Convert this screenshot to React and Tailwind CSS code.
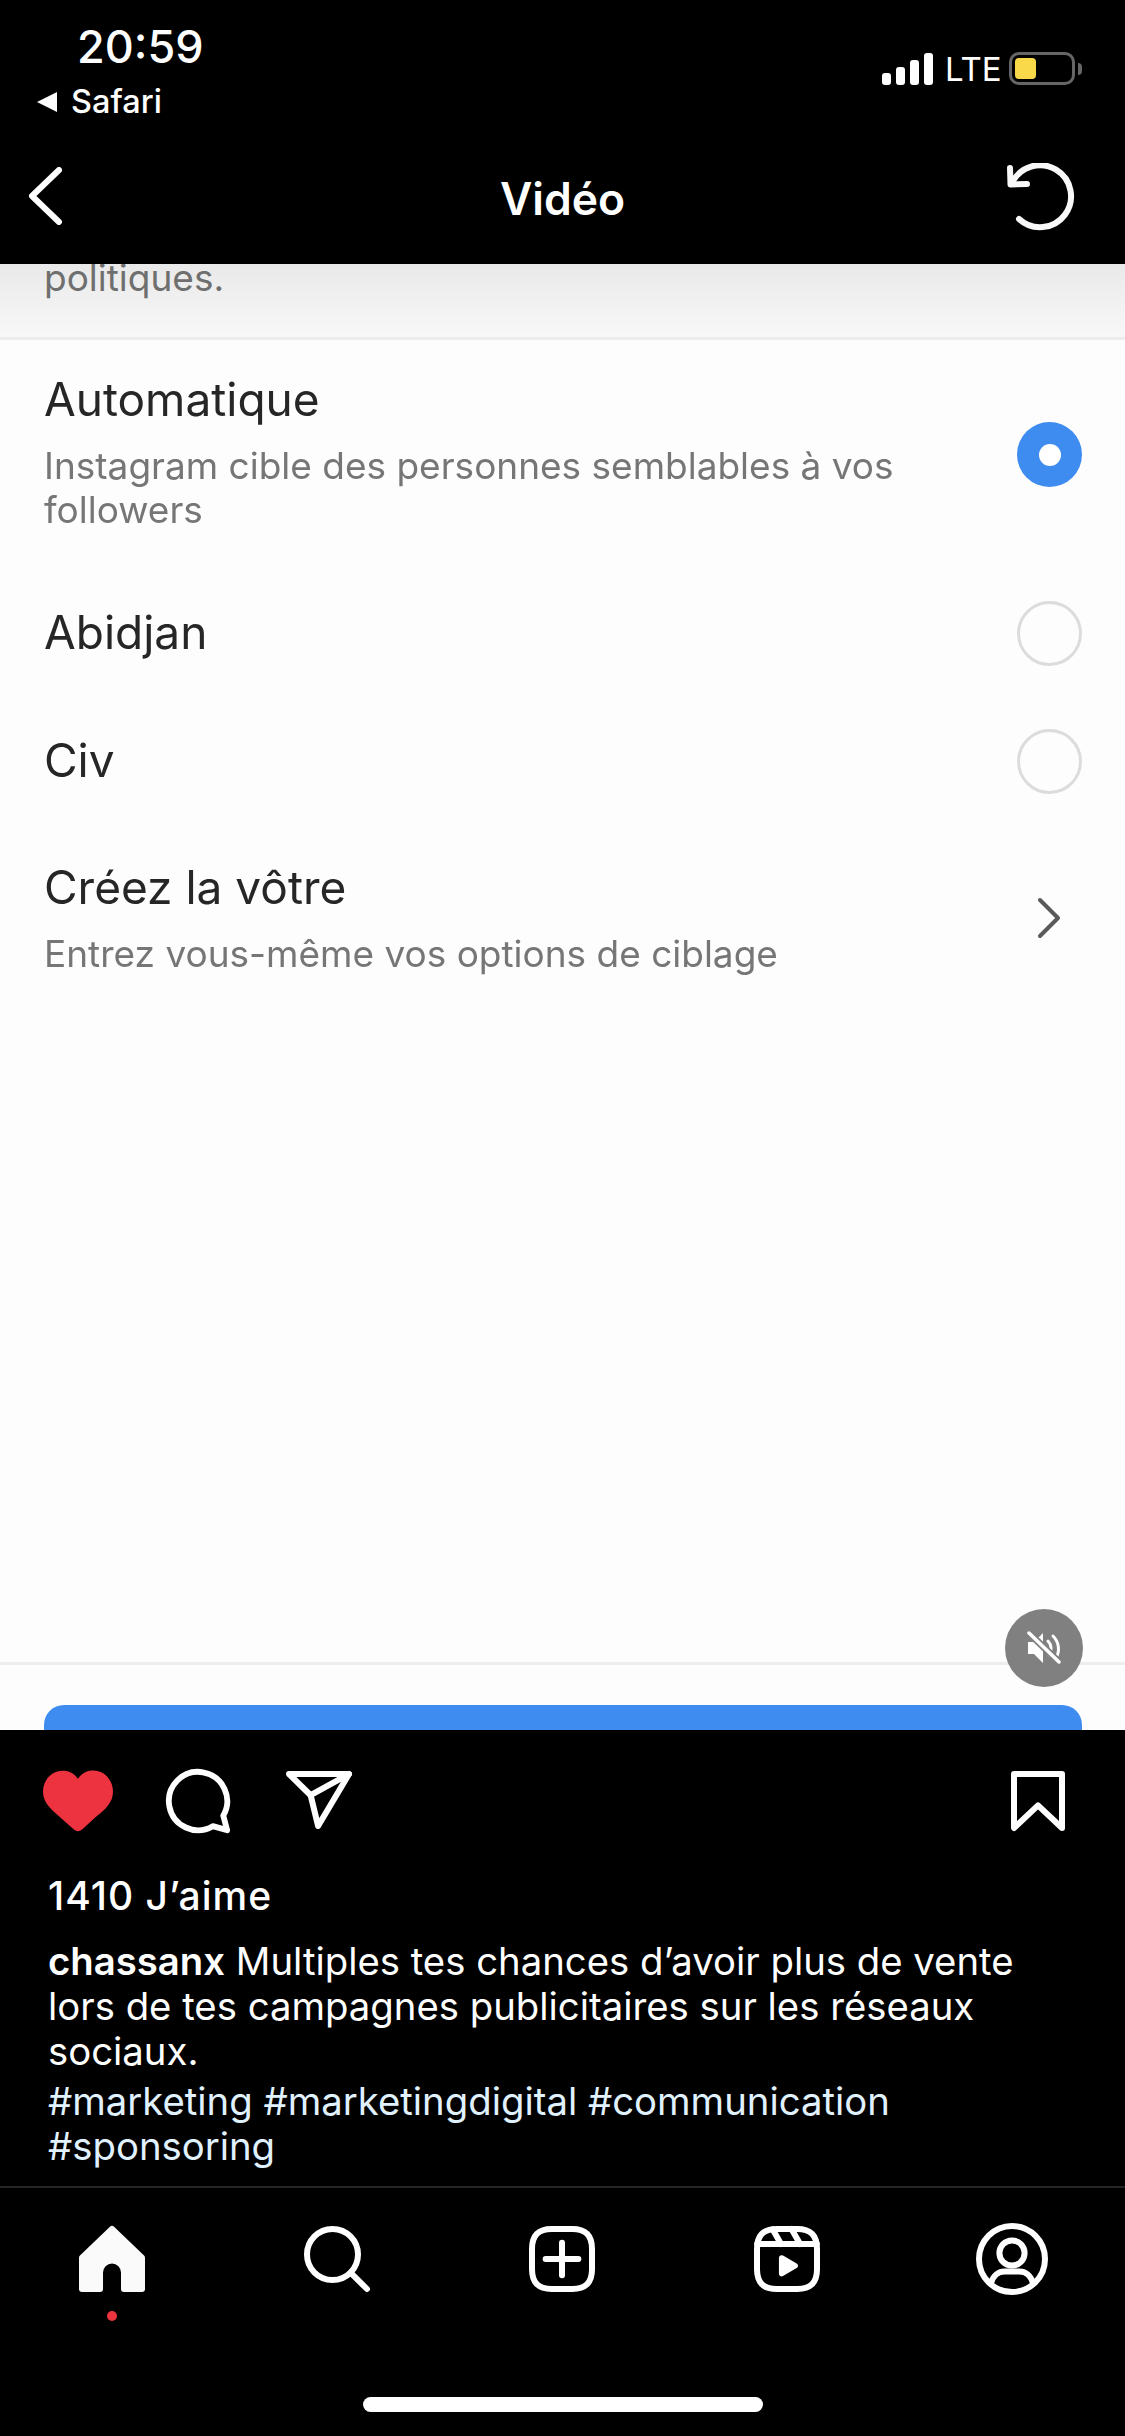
const font = "font-['Inter','Liberation_Sans',sans-serif]"

const Radio = ({on}) => on ? (
	<div className="w-[65px] h-[65px] rounded-full bg-[#3f8cf1] flex items-center justify-center shrink-0">
		<div className="w-[22px] h-[22px] rounded-full bg-white"></div>
	</div>
) : (
	<div className="w-[65px] h-[65px] mt-[2px] rounded-full border-[3px] border-[#dcdcdc] shrink-0"></div>
)

const Icon = ({size=72, fill="none", sw=2, box="0 0 24 24", children}) => (
	<svg width={size} height={size} viewBox={box} fill={fill} stroke={fill==="none" ? "white" : "none"} strokeWidth={sw} strokeLinecap="round" strokeLinejoin="round" className="block">
		{children}
	</svg>
)

const StatusBar = () => (
	<div className="h-[133px] relative">
		<div className="flex justify-between items-start pl-[37px] pr-[43px] pt-[23px]">
			<div>
				<div className="pl-[40px] text-[45px] leading-[48px] font-medium text-white">20:59</div>
				<div className="flex items-center gap-[14px] mt-[12px]">
					<div className="w-0 h-0 border-y-[10px] border-y-transparent border-r-[20px] border-r-white"></div>
					<span className="text-[32.500px] leading-[38px] font-medium text-white">Safari</span>
				</div>
			</div>
			<div className="flex items-end gap-[12px] pt-[29px]">
				<div className="flex items-end gap-[5px] h-[32px]">
					<div className="w-[9px] h-[12px] rounded-[3px] bg-white"></div>
					<div className="w-[9px] h-[18px] rounded-[3px] bg-white"></div>
					<div className="w-[9px] h-[25px] rounded-[3px] bg-white"></div>
					<div className="w-[9px] h-[32px] rounded-[3px] bg-white"></div>
				</div>
				<span className="text-[33px] leading-[32px] text-white w-[52px]">LTE</span>
				<div className="flex items-center">
					<div className="w-[66px] h-[33px] rounded-[10px] border-[3px] border-[#666666] p-[3px]">
						<div className="w-[21px] h-full rounded-[4px] bg-[#f9d84a]"></div>
					</div>
					<div className="w-[4px] h-[12px] ml-[3px] rounded-r-full bg-[#666666]"></div>
				</div>
			</div>
		</div>
	</div>
)

const NavBar = () => (
	<div className="h-[131px] flex items-center justify-between pl-[28px] pr-[50px]">
		<div className="w-[90px]">
			<svg width="34" height="58" viewBox="0 0 34 58" fill="none" stroke="white" strokeWidth="6" strokeLinecap="round" strokeLinejoin="round" className="mb-[5px]">
				<path d="M31 3 4 29l27 26" />
			</svg>
		</div>
		<span className="text-[44.500px] leading-[50px] font-semibold text-white">Vidéo</span>
		<svg width="68" height="68" viewBox="0 0 68 68" fill="none" stroke="#f8f8f8" strokeWidth="6" strokeLinecap="round" strokeLinejoin="round" className="mb-[3px]">
			<path d="M5 20A31 31 0 1 1 12 56" />
			<path d="M3 5 3.500 21.500 20 21" />
		</svg>
	</div>
)

const VideoArea = () => (
	<div className="h-[1466px] relative overflow-hidden bg-[#fdfdfd]">
		<div className="blur-[0.5px]">
			<div className="h-[76px] bg-gradient-to-b from-[#e9e9e9] to-[#f8f8f8] border-b-[3px] border-[#ededed] pl-[44px] overflow-hidden">
				<p className="text-[37px] leading-[44px] text-[#6f6f6f] -mt-[8px]">politiques.</p>
			</div>
			<div className="flex items-start justify-between pl-[44px] pr-[43px] pt-[31px] h-[228px]">
				<div>
					<p className="text-[46px] leading-[56px] text-[#262626]">Automatique</p>
					<p className="text-[37px] leading-[44px] text-[#767676] mt-[17px]">Instagram cible des personnes semblables à vos<br />followers</p>
				</div>
				<div className="mt-[51px]"><Radio on /></div>
			</div>
			<div className="flex items-center justify-between pl-[44px] pr-[43px] h-[128px]">
				<p className="text-[46px] leading-[56px] text-[#262626]">Abidjan</p>
				<Radio />
			</div>
			<div className="flex items-center justify-between pl-[44px] pr-[43px] h-[128px]">
				<p className="text-[46px] leading-[56px] text-[#262626]">Civ</p>
				<Radio />
			</div>
			<div className="flex items-center justify-between pl-[44px] pr-[64px] pt-[35px]">
				<div>
					<p className="text-[46px] leading-[56px] text-[#262626]">Créez la vôtre</p>
					<p className="text-[37px] leading-[44px] text-[#767676] mt-[17px]">Entrez vous-même vos options de ciblage</p>
				</div>
				<svg width="24" height="42" viewBox="0 0 24 42" fill="none" stroke="#5a5a5a" strokeWidth="4" strokeLinecap="round" strokeLinejoin="round">
					<path d="M3 3l18 18L3 39" />
				</svg>
			</div>
		</div>
		<div className="absolute left-0 right-0 top-[1398px] border-t-[3px] border-[#eeeeee]"></div>
		<div className="absolute left-[44px] right-[43px] top-[1441px] h-[60px] rounded-[20px] bg-[#3f8cf1]"></div>
		<div className="absolute left-[1005px] top-[1345px] w-[78px] h-[78px] rounded-full bg-[#808080] flex items-center justify-center">
			<svg width="34" height="34" viewBox="0 0 34 34" fill="none" stroke="white" strokeWidth="3" strokeLinecap="round" strokeLinejoin="round">
				<path d="M1 11h6l9-9v30l-9-9H1z" fill="white" stroke="none" />
				<path d="M21 10a11 11 0 0 1 1 14" />
				<path d="M26 5a18 18 0 0 1 3 22" />
				<path d="M2 2l30 29" stroke="#808080" strokeWidth="7" />
				<path d="M2 2l30 29" strokeWidth="3.500" />
			</svg>
		</div>
	</div>
)

const Actions = () => (
	<div className="h-[139px] flex items-center justify-between pl-[43px] pr-[51px] pt-[2px]">
		<div className="flex items-center gap-[50px]">
			<svg width="70" height="70" viewBox="0 0 48 48" className="block">
				<path fill="#ee3340" d="M34.600 3.100c-4.500 0-7.900 1.800-10.600 5.600-2.700-3.700-6.100-5.500-10.600-5.500C6 3.100 0 9.600 0 17.600c0 7.300 5.400 12 10.600 16.500.6.500 1.300 1.100 1.900 1.700l2.300 2c4.400 3.900 6.600 5.900 7.600 6.500.5.300 1.100.500 1.600.500s1.100-.2 1.600-.5c1-.6 2.800-2.200 7.800-6.800l2-1.800c.7-.6 1.300-1.200 2-1.700C42.700 29.600 48 25 48 17.600c0-8-6-14.500-13.400-14.500z" />
			</svg>
			<Icon size={70}>
				<path d="M20.656 17.008a9.993 9.993 0 1 0-3.590 3.615L22 22Z" />
			</Icon>
			<Icon>
				<path d="M22 3 9.218 10.083" />
				<path d="M11.698 20.334 22 3.001H2l7.218 7.083 2.480 10.250Z" />
			</Icon>
		</div>
		<Icon>
			<path d="M20 21l-8-7.560L4 21V3h16z" />
		</Icon>
	</div>
)

const Caption = () => (
	<div className="pl-[48px] pr-[40px] text-white text-[38.300px] leading-[45px] h-[317px]">
		<p className="font-medium mt-[4px] text-[39px] tracking-[1px]">1410 J’aime</p>
		<p className="mt-[21px]"><span className="font-semibold">chassanx</span> Multiples tes chances d’avoir plus de vente<br />lors de tes campagnes publicitaires sur les réseaux<br />sociaux.</p>
		<p className="mt-[5px] text-[#e0f1ff]">#marketing #marketingdigital #communication<br />#sponsoring</p>
	</div>
)

const TabBar = () => (
	<div className="border-t-[2px] border-[#262626] flex-1 relative">
		<div className="grid grid-cols-5 pt-[35px] pr-[1px]">
			<div className="flex flex-col items-center">
				<Icon fill="#fafafa">
					<path d="M22 23h-6.001a1 1 0 0 1-1-1v-5.455a2.997 2.997 0 1 0-5.993 0V22a1 1 0 0 1-1 1H2a1 1 0 0 1-1-1V11.543a1.002 1.002 0 0 1 .31-.724l10-9.543a1.001 1.001 0 0 1 1.380 0l10 9.543a1.002 1.002 0 0 1 .31.724V22a1 1 0 0 1-1 1Z" />
				</Icon>
				<div className="w-[10px] h-[10px] rounded-full bg-[#ee3340] mt-[16px]"></div>
			</div>
			<div className="flex justify-center items-start">
				<Icon>
					<path d="M19 10.500A8.500 8.500 0 1 1 10.500 2a8.500 8.500 0 0 1 8.500 8.500Z" />
					<path d="M16.511 16.511 22 22" />
				</Icon>
			</div>
			<div className="flex justify-center items-start">
				<Icon>
					<path d="M2 12v3.450c0 2.849.698 4.005 1.606 4.944.94.909 2.098 1.608 4.946 1.608h6.896c2.848 0 4.006-.7 4.946-1.608C21.302 19.455 22 18.300 22 15.450V8.552c0-2.849-.698-4.006-1.606-4.945C19.454 2.700 18.296 2 15.448 2H8.552c-2.848 0-4.006.699-4.946 1.607C2.698 4.547 2 5.703 2 8.552Z" />
					<path d="M6.545 12.001h10.910" />
					<path d="M12.003 6.545v10.910" />
				</Icon>
			</div>
			<div className="flex justify-center items-start">
				<Icon>
					<path d="M2.049 7.002h19.902" />
					<path d="M13.504 2.001l2.858 5.001" />
					<path d="M7.207 2.110l2.795 4.892" />
					<path d="M2 12.001v3.449c0 2.849.698 4.006 1.606 4.945.94.908 2.098 1.607 4.946 1.607h6.896c2.848 0 4.006-.699 4.946-1.607.908-.939 1.606-2.096 1.606-4.945V8.552c0-2.848-.698-4.006-1.606-4.945C19.454 2.699 18.296 2 15.448 2H8.552c-2.848 0-4.006.699-4.946 1.607C2.698 4.546 2 5.704 2 8.552Z" />
					<path fill="white" d="M9.763 17.664a.908.908 0 0 1-.454-.787V11.630a.909.909 0 0 1 1.364-.788l4.545 2.624a.909.909 0 0 1 0 1.575l-4.545 2.624a.91.91 0 0 1-.910 0Z" stroke="none" />
				</Icon>
			</div>
			<div className="flex justify-center items-start">
				<Icon>
					<circle cx="12" cy="12" r="11" />
					<circle cx="12" cy="10" r="4.200" />
					<path d="M5 20c.8-2.600 2.600-3.800 4.500-3.800h5c1.900 0 3.700 1.200 4.500 3.800" />
				</Icon>
			</div>
		</div>
		<div className="absolute left-[363px] top-[209px] w-[400px] h-[15px] rounded-full bg-white"></div>
	</div>
)

export default function App() {
	return (
		<div className={`w-[1125px] h-[2436px] bg-black flex flex-col overflow-hidden ${font}`}>
			<StatusBar />
			<NavBar />
			<VideoArea />
			<Actions />
			<Caption />
			<TabBar />
		</div>
	)
}
